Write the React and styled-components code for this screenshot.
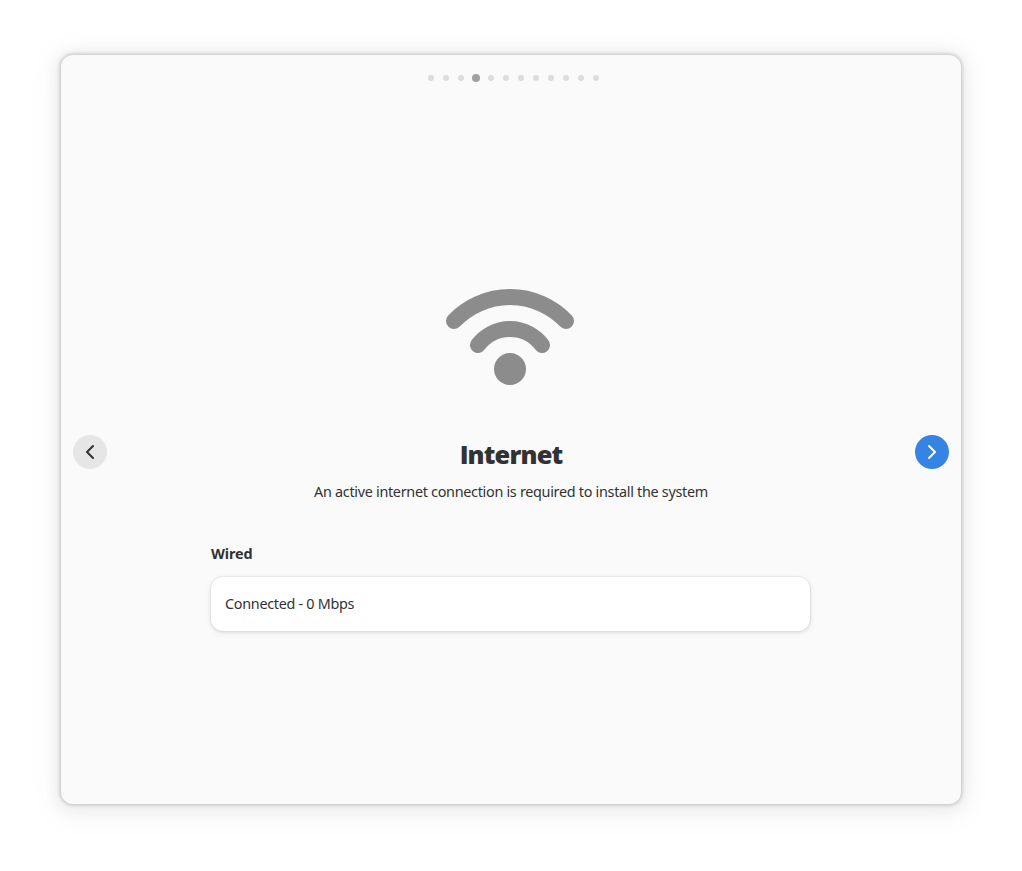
import React from "react";
import styled, { createGlobalStyle } from "styled-components";

const GlobalStyle = createGlobalStyle`
  * { box-sizing: border-box; }
  body {
    margin: 0;
    background: #fff;
    color: #323232;
    font-family: "Noto Sans", sans-serif;
    font-size: 14.4px;
    overflow: hidden;
  }
`;

const Desktop = styled.div`
  height: 871px;
  padding: 55px 61px 0;
`;

const Window = styled.main`
  width: 900px;
  height: 749px;
  display: flex;
  flex-direction: column;
  background: #fafafa;
  border-radius: 12px;
  box-shadow:
    0 0 3px 2px rgba(0, 0, 0, 0.12),
    0 2px 14px 5px rgba(0, 0, 0, 0.05),
    0 4px 28px 12px rgba(0, 0, 0, 0.03),
    0 0 0 1px rgba(0, 0, 0, 0.02);
`;

const Pager = styled.nav`
  height: 46px;
  padding-left: 5px;
  display: flex;
  align-items: center;
  justify-content: center;
`;

const DotSlot = styled.span`
  width: 15px;
  display: flex;
  justify-content: center;
`;

const Dot = styled.span`
  width: ${(p) => (p.$active ? 8 : 6)}px;
  height: ${(p) => (p.$active ? 8 : 6)}px;
  border-radius: 50%;
  background: ${(p) => (p.$active ? "#a0a0a0" : "#dcdcdc")};
`;

const Page = styled.div`
  flex: 1;
  display: flex;
  align-items: flex-start;
  justify-content: space-between;
  padding: 0 12px;
`;

const NavButton = styled.button`
  width: 34px;
  height: 34px;
  margin-top: 334px;
  padding: 0;
  border: 0;
  border-radius: 50%;
  display: grid;
  place-items: center;
  color: ${(p) => (p.$suggested ? "#fff" : "#323232")};
  background: ${(p) => (p.$suggested ? "#3584e4" : "#e6e6e6")};
`;

const Content = styled.section`
  width: 600px;
  display: flex;
  flex-direction: column;
  align-items: center;
`;

const WifiIcon = styled.svg`
  display: block;
  width: 128px;
  height: 96px;
  margin: 188px 2px 0 0;
`;

const Title = styled.h1`
  margin: 51px 0 0;
  font-family: "Open Sans", sans-serif;
  font-size: 25.4px;
  font-weight: 800;
  line-height: 36px;
  letter-spacing: -0.85px;
`;

const Description = styled.p`
  margin: 9px 0 0;
  line-height: 22px;
  letter-spacing: -0.3px;
  white-space: nowrap;
`;

const GroupTitle = styled.h2`
  align-self: stretch;
  margin: 40px 0 0;
  font-size: 14.4px;
  font-weight: 700;
  line-height: 22px;
  letter-spacing: -0.1px;
`;

const Row = styled.div`
  width: 599px;
  height: 54px;
  margin: 12px 1px 0 0;
  padding: 0 14px;
  display: flex;
  align-items: center;
  background: #fff;
  border-radius: 12px;
  box-shadow:
    0 0 0 1px rgba(0, 0, 0, 0.03),
    0 1px 3px 1px rgba(0, 0, 0, 0.07),
    0 2px 6px 2px rgba(0, 0, 0, 0.03);
`;

const RowLabel = styled.span`
  line-height: 22px;
  letter-spacing: -0.3px;
`;

const Chevron = ({ d }) => (
  <svg width="16" height="16" viewBox="0 0 16 16" fill="none" stroke="currentColor" strokeWidth="2" strokeLinecap="round" strokeLinejoin="round">
    <path d={d} />
  </svg>
);

const PAGE_COUNT = 12;
const CURRENT_PAGE = 3;

export default function App() {
  return (
    <>
      <GlobalStyle />
      <Desktop>
        <Window>
          <Pager>
            {Array.from({ length: PAGE_COUNT }, (_, i) => (
              <DotSlot key={i}>
                <Dot $active={i === CURRENT_PAGE} />
              </DotSlot>
            ))}
          </Pager>
          <Page>
            <NavButton aria-label="Back">
              <Chevron d="M11 2 5 8l6 6" />
            </NavButton>
            <Content>
              <WifiIcon viewBox="0 0 128 96" fill="none" stroke="#8c8c8c" strokeWidth="16" strokeLinecap="round">
                <path d="M8 32A77.5 77.5 0 0 1 120 32" />
                <path d="M32 56A40 40 0 0 1 96 56" />
                <circle cx="64" cy="80" r="16" fill="#8c8c8c" stroke="none" />
              </WifiIcon>
              <Title>Internet</Title>
              <Description>An active internet connection is required to install the system</Description>
              <GroupTitle>Wired</GroupTitle>
              <Row>
                <RowLabel>Connected - 0 Mbps</RowLabel>
              </Row>
            </Content>
            <NavButton $suggested aria-label="Next">
              <Chevron d="m5 2 6 6-6 6" />
            </NavButton>
          </Page>
        </Window>
      </Desktop>
    </>
  );
}
